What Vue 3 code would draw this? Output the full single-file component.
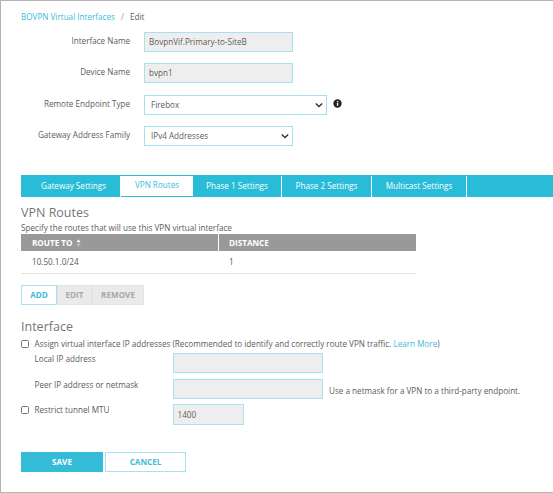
<script setup>
const tabs = ['Gateway Settings', 'VPN Routes', 'Phase 1 Settings', 'Phase 2 Settings', 'Multicast Settings']
</script>

<template>
  <div class="frame">
    <div class="crumbs"><a class="link">BOVPN Virtual Interfaces</a><span class="sep">/</span><span>Edit</span></div>

    <div class="form">
      <div class="row r1"><label>Interface Name</label><div class="input ro w148">BovpnVif.Primary-to-SiteB</div></div>
      <div class="row r2"><label>Device Name</label><div class="input ro w148">bvpn1</div></div>
      <div class="row r3">
        <label>Remote Endpoint Type</label>
        <div class="input sel w182">Firebox
          <svg class="chev" viewBox="0 0 10 6"><path d="M1 1l4 4 4-4" fill="none" stroke="#333" stroke-width="1.7"/></svg>
        </div>
        <svg class="info" viewBox="0 0 10 10"><circle cx="5" cy="5" r="4.6" fill="#222"/><rect x="4.3" y="4.3" width="1.5" height="3.2" fill="#fff"/><rect x="4.3" y="2.3" width="1.5" height="1.3" fill="#fff"/></svg>
      </div>
      <div class="row r4">
        <label>Gateway Address Family</label>
        <div class="input sel w148">IPv4 Addresses
          <svg class="chev" viewBox="0 0 10 6"><path d="M1 1l4 4 4-4" fill="none" stroke="#333" stroke-width="1.7"/></svg>
        </div>
      </div>
    </div>

    <div class="tabs">
      <div v-for="(t, i) in tabs" :key="t" class="tab" :class="['t' + i, { active: i === 1 }]">{{ t }}</div>
    </div>

    <h2 class="h-routes">VPN Routes</h2>
    <p class="desc">Specify the routes that will use this VPN virtual interface</p>

    <div class="table">
      <div class="thead">
        <div class="c1">ROUTE TO
          <svg class="sort" viewBox="0 0 6 9"><path d="M3 0l2.5 3.5h-5z" fill="#fff"/><path d="M3 9L.5 5.5h5z" fill="#c4c4c4"/></svg>
        </div>
        <div class="c2">DISTANCE</div>
      </div>
      <div class="tbody">
        <div class="c1">10.50.1.0/24</div>
        <div class="c2">1</div>
      </div>
    </div>

    <div class="actions">
      <div class="btn add">ADD</div>
      <div class="btn off edit">EDIT</div>
      <div class="btn off remove">REMOVE</div>
    </div>

    <h2 class="h-iface">Interface</h2>
    <div class="check c-assign">
      <span class="box"></span>
      <span>Assign virtual interface IP addresses (Recommended to identify and correctly route VPN traffic. <a class="link">Learn More</a>)</span>
    </div>
    <div class="sub s1"><label>Local IP address</label><div class="input ro w150"></div></div>
    <div class="sub s2">
      <label>Peer IP address or netmask</label><div class="input ro w150"></div>
      <span class="hint">Use a netmask for a VPN to a third-party endpoint.</span>
    </div>
    <div class="check c-mtu">
      <span class="box"></span>
      <span class="mtu-label">Restrict tunnel MTU</span>
      <div class="input ro mtu">1400</div>
    </div>

    <div class="footer">
      <div class="btn save">SAVE</div>
      <div class="btn cancel">CANCEL</div>
    </div>
  </div>
</template>

<style>
html, body { margin: 0; background: #fff; }
</style>

<style scoped>
.frame {
  box-sizing: border-box;
  width: 553px;
  height: 493px;
  border: 1px solid #b4b4b4;
  border-right: 0;
  padding: 0 0 0 20px;
  font-family: "Open Sans", "Noto Sans", sans-serif;
  font-size: 8.15px;
  color: #5c5c5c;
  background: #fff;
  overflow: hidden;
}
.link { color: #3cbcd8; }
.crumbs { margin-top: 9px; height: 13px; line-height: 13px; }
.sep { margin: 0 6px; color: #999; }
.form { margin-top: 9px; margin-left: -20px; }
.row { display: flex; align-items: center; }
.row label { width: 129px; text-align: right; margin-right: 14px; position: relative; top: -2px; }
.r2 { margin-top: 11px; }
.r3 { margin-top: 12px; }
.r4 { margin-top: 11px; }
.input {
  box-sizing: border-box;
  height: 20px;
  line-height: 18px;
  border: 1px solid #a4e2ee;
  padding-left: 4px;
  color: #5c5c5c;
  flex: none;
}
.ro { background: #eeeeee; }
.sel { background: #fff; position: relative; padding-left: 6px; }
.w148 { width: 149px; }
.w182 { width: 183px; }
.w150 { width: 150px; }
.chev { position: absolute; right: 3px; top: 6px; width: 8px; height: 6px; }
.info { width: 9px; height: 9px; margin-left: 6px; margin-top: -3px; }
.tabs {
  display: flex;
  height: 22px;
  margin-top: 29px;
  background: #29bcd8;
  border-top: 1px solid #29bcd8;
  box-sizing: border-box;
}
.tab {
  box-sizing: border-box;
  text-align: center;
  color: #fff;
  line-height: 19px;
  border-right: 1px solid #fff;
  height: 21px;
}
.tab.active { background: #fff; color: #3cbcd8; border-right: 0; border-top: 1px solid #29bcd8; line-height: 18px; margin-top: -1px; height: 22px; border-bottom: 1px solid #29bcd8; }
.t0 { width: 100px; padding-left: 6px; }
.t1 { width: 72px; }
.t2 { width: 89px; }
.t3 { width: 90px; }
.t4 { width: 95px; }
h2 { margin: 0; font-weight: 400; font-size: 12.5px; color: #767676; line-height: 16px; }
.h-routes { margin-top: 8px; }
.desc { margin: 1px 0 0; line-height: 12px; height: 12px; }
.table { width: 395px; margin-top: 0; }
.thead { display: flex; height: 17px; line-height: 17px; background: #999; color: #fff; font-weight: 700; }
.thead .c1 { border-right: 1px solid #fff; }
.c1 { box-sizing: border-box; width: 198px; padding-left: 11px; flex: none; }
.c2 { padding-left: 10px; }
.sort { width: 5px; height: 8px; margin-left: 1px; vertical-align: -1px; }
.tbody { display: flex; height: 23px; line-height: 22px; border-bottom: 1px solid #e2e2e2; box-sizing: border-box; }
.tbody .c2 { color: #2a5f86; }
.actions { display: flex; margin-top: 11px; gap: 0; }
.btn { box-sizing: border-box; text-align: center; font-weight: 700; height: 20px; line-height: 18px; }
.add { width: 36px; border: 1px solid #a4e2ee; color: #3cbcd8; background: #fff; }
.off { background: #eaeaea; color: #a8a8a8; border: 1px solid #e4e4e4; }
.edit { width: 35px; }
.remove { width: 52px; }
.h-iface { margin-top: 14px; }
.check { display: flex; align-items: center; }
.box { box-sizing: border-box; width: 8px; height: 8px; border: 1px solid #777; border-radius: 1.5px; background: #fff; margin-right: 5.5px; flex: none; }
.c-assign { margin-top: 2px; height: 13px; }
.sub { display: flex; align-items: flex-start; padding-left: 13.5px; }
.sub label { width: 138.5px; line-height: 11px; flex: none; }
.s1 { margin-top: 3px; }
.s2 { margin-top: 6px; }
.hint { margin-left: 6px; align-self: center; position: relative; top: 1px; }
.c-mtu { margin-top: 5px; align-items: flex-start; height: 21px; }
.c-mtu .box { margin-top: 2px; }
.mtu-label { width: 138px; line-height: 11px; flex: none; }
.mtu { width: 71px; height: 21px; line-height: 19px; border-width: 1px; }
.footer { display: flex; gap: 2px; margin-top: 27px; }
.save { width: 82px; background: #35bcd8; color: #fff; border: 1px solid #35bcd8; }
.cancel { width: 81px; background: #fff; color: #3cbcd8; border: 1px solid #a4e2ee; }
</style>
